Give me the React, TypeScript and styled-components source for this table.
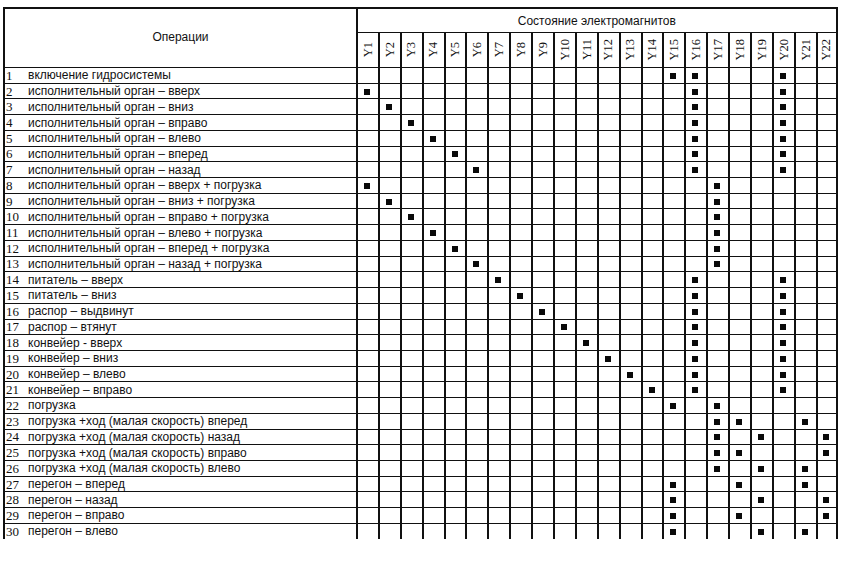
import React from "react";
import styled, { createGlobalStyle } from "styled-components";

const Global = createGlobalStyle`
  html, body { margin: 0; padding: 0; background: #ffffff; }
  * { box-sizing: border-box; }
`;

const Page = styled.div`
  padding: 7px 0 0 3px;
  width: 850px;
  height: 568px;
  background: #ffffff;
  color: #111;
`;

const Grid = styled.div`
  display: grid;
  grid-template-columns: 353px repeat(22, 21.9px);
  grid-template-rows: 25px 35px repeat(30, 15.73px);
`;

const OpsHeader = styled.div`
  grid-row: 1 / span 2;
  grid-column: 1;
  border-left: 2px solid #111;
  border-top: 2px solid #111;
  display: flex;
  align-items: center;
  justify-content: center;
  font-family: "Liberation Sans", Arial, sans-serif;
  font-size: 12px;
  padding-bottom: 2px;
`;

const StateHeader = styled.div`
  grid-row: 1;
  grid-column: 2 / span 22;
  border-left: 2px solid #111;
  border-top: 2px solid #111;
  border-right: 2px solid #111;
  display: flex;
  align-items: center;
  justify-content: center;
  font-family: "Liberation Sans", Arial, sans-serif;
  font-size: 12px;
`;

const YCell = styled.div<{ $last?: boolean }>`
  border-left: 2px solid #111;
  border-top: 1.5px solid #111;
  border-right: ${(p) => (p.$last ? "2px solid #111" : "0")};
  display: flex;
  align-items: center;
  justify-content: center;
`;

const YLabel = styled.span`
  writing-mode: vertical-rl;
  transform: rotate(180deg);
  font-family: "Liberation Serif", "Times New Roman", serif;
  font-size: 12.5px;
  line-height: 1;
`;

const OpCell = styled.div`
  border-left: 2px solid #111;
  border-top: 1.5px solid #111;
  display: flex;
  align-items: center;
  overflow: hidden;
  white-space: nowrap;
`;

const Num = styled.span`
  width: 23px;
  padding-left: 1px;
  font-family: "Liberation Serif", "Times New Roman", serif;
  font-size: 13px;
  line-height: 1;
`;

const OpText = styled.span`
  font-family: "Liberation Sans", Arial, sans-serif;
  font-size: 12px;
  line-height: 1;
`;

const MarkCell = styled.div<{ $last?: boolean }>`
  border-left: 2px solid #111;
  border-top: 1.5px solid #111;
  border-right: ${(p) => (p.$last ? "2px solid #111" : "0")};
  display: flex;
  align-items: center;
  justify-content: center;
  padding-right: 2px;
  padding-top: 1px;
`;

const Mark = styled.span`
  width: 6px;
  height: 6px;
  background: #0a0a0a;
`;

const rows: [string, number[]][] = [
  ["включение гидросистемы", [15, 16, 20]],
  ["исполнительный орган – вверх", [1, 16, 20]],
  ["исполнительный орган – вниз", [2, 16, 20]],
  ["исполнительный орган – вправо", [3, 16, 20]],
  ["исполнительный орган – влево", [4, 16, 20]],
  ["исполнительный орган – вперед", [5, 16, 20]],
  ["исполнительный орган – назад", [6, 16, 20]],
  ["исполнительный орган – вверх + погрузка", [1, 17]],
  ["исполнительный орган – вниз + погрузка", [2, 17]],
  ["исполнительный орган – вправо + погрузка", [3, 17]],
  ["исполнительный орган – влево + погрузка", [4, 17]],
  ["исполнительный орган – вперед + погрузка", [5, 17]],
  ["исполнительный орган – назад + погрузка", [6, 17]],
  ["питатель – вверх", [7, 16, 20]],
  ["питатель – вниз", [8, 16, 20]],
  ["распор – выдвинут", [9, 16, 20]],
  ["распор – втянут", [10, 16, 20]],
  ["конвейер - вверх", [11, 16, 20]],
  ["конвейер – вниз", [12, 16, 20]],
  ["конвейер – влево", [13, 16, 20]],
  ["конвейер – вправо", [14, 16, 20]],
  ["погрузка", [15, 17]],
  ["погрузка +ход (малая скорость) вперед", [17, 18, 21]],
  ["погрузка +ход (малая скорость) назад", [17, 19, 22]],
  ["погрузка +ход (малая скорость) вправо", [17, 18, 22]],
  ["погрузка +ход (малая скорость) влево", [17, 19, 21]],
  ["перегон – вперед", [15, 18, 21]],
  ["перегон – назад", [15, 19, 22]],
  ["перегон – вправо", [15, 18, 22]],
  ["перегон – влево", [15, 19, 21]],
];

const cols = Array.from({ length: 22 }, (_, i) => i + 1);

export default function App() {
  return (
    <Page>
      <Global />
      <Grid>
        <OpsHeader>Операции</OpsHeader>
        <StateHeader>Состояние электромагнитов</StateHeader>
        {cols.map((c) => (
          <YCell key={`y${c}`} $last={c === 22}>
            <YLabel>{`Y${c}`}</YLabel>
          </YCell>
        ))}
        {rows.map(([text, marks], i) => (
          <React.Fragment key={i}>
            <OpCell>
              <Num>{i + 1}</Num>
              <OpText>{text}</OpText>
            </OpCell>
            {cols.map((c) => (
              <MarkCell key={c} $last={c === 22}>
                {marks.includes(c) ? <Mark /> : null}
              </MarkCell>
            ))}
          </React.Fragment>
        ))}
      </Grid>
    </Page>
  );
}
